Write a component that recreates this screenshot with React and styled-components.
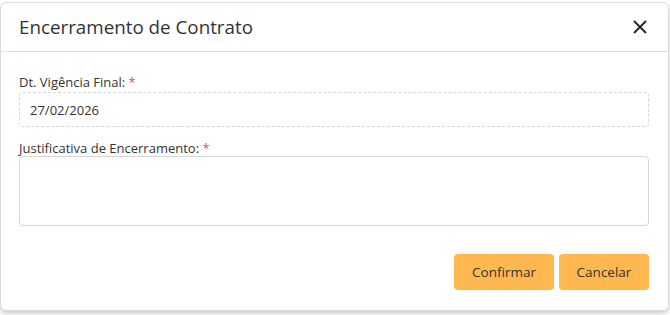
import React from 'react'
import styled, { createGlobalStyle } from 'styled-components'

const GlobalStyle = createGlobalStyle`
  html, body {
    margin: 0;
    padding: 0;
    background: #ffffff;
  }
  body {
    font-family: "Segoe UI", "Open Sans", "Noto Sans", sans-serif;
    color: #333;
  }
`

const Page = styled.div`
  width: 670px;
  height: 315px;
  padding-top: 2px;
  box-sizing: border-box;
  overflow: hidden;
`

const Modal = styled.div`
  width: 669px;
  height: 309px;
  box-sizing: border-box;
  background: #fff;
  border: 1px solid #dcdcdc;
  border-radius: 6px;
  box-shadow: 0 3px 4px rgba(0, 0, 0, 0.18);
  display: flex;
  flex-direction: column;
`

const Header = styled.div`
  height: 49px;
  display: flex;
  align-items: center;
  justify-content: space-between;
  padding: 0 19px 0 18px;
  border-bottom: 1px solid #dee2e6;
  box-sizing: border-box;
`

const Title = styled.h5`
  margin: 0;
  font-size: 18.8px;
  font-weight: 400;
  color: #333;
`

const CloseButton = styled.button`
  border: 0;
  background: transparent;
  padding: 0;
  width: 18px;
  height: 18px;
  display: flex;
  align-items: center;
  justify-content: center;
  color: #222;
  cursor: pointer;
`

const Body = styled.div`
  padding: 22px 19px 0 18px;
  display: flex;
  flex-direction: column;
`

const Field = styled.div`
  display: flex;
  flex-direction: column;
  margin-bottom: ${(p) => p.$gap || 0}px;
`

const Label = styled.label`
  font-size: 13px;
  color: #333;
  line-height: 16px;
  margin-bottom: ${(p) => p.$space ?? 2}px;
`

const Required = styled.span`
  color: #d9534f;
`

const ReadOnlyInput = styled.div`
  height: 35px;
  box-sizing: border-box;
  border: 1px dashed #d6d6d6;
  border-radius: 4px;
  padding: 0 10px;
  display: flex;
  align-items: center;
  font-size: 13px;
  color: #333;
`

const TextArea = styled.textarea`
  height: 70px;
  box-sizing: border-box;
  border: 1px solid #d6d6d6;
  border-radius: 4px;
  resize: none;
  font-family: inherit;
  font-size: 13px;
  padding: 6px 10px;
  outline: none;
`

const Footer = styled.div`
  margin-top: auto;
  display: flex;
  justify-content: flex-end;
  gap: 5px;
  padding: 0 19px 20px 18px;
`

const Button = styled.button`
  height: 36px;
  width: ${(p) => p.$width}px;
  border: 0;
  border-radius: 4px;
  background: #ffb84f;
  color: #333;
  font-family: inherit;
  font-size: 13.5px;
  cursor: pointer;
`

export default function App() {
  return (
    <>
      <GlobalStyle />
      <Page>
        <Modal>
          <Header>
            <Title>Encerramento de Contrato</Title>
            <CloseButton aria-label="Fechar">
              <svg width="14" height="14" viewBox="0 0 14 14">
                <path d="M1.5 1.5 L12.5 12.5 M12.5 1.5 L1.5 12.5" stroke="#222" strokeWidth="1.8" strokeLinecap="round" />
              </svg>
            </CloseButton>
          </Header>
          <Body>
            <Field $gap={13}>
              <Label>Dt. Vigência Final: <Required>*</Required></Label>
              <ReadOnlyInput>27/02/2026</ReadOnlyInput>
            </Field>
            <Field>
              <Label $space={0}>Justificativa de Encerramento: <Required>*</Required></Label>
              <TextArea />
            </Field>
          </Body>
          <Footer>
            <Button $width={100}>Confirmar</Button>
            <Button $width={90}>Cancelar</Button>
          </Footer>
        </Modal>
      </Page>
    </>
  )
}
